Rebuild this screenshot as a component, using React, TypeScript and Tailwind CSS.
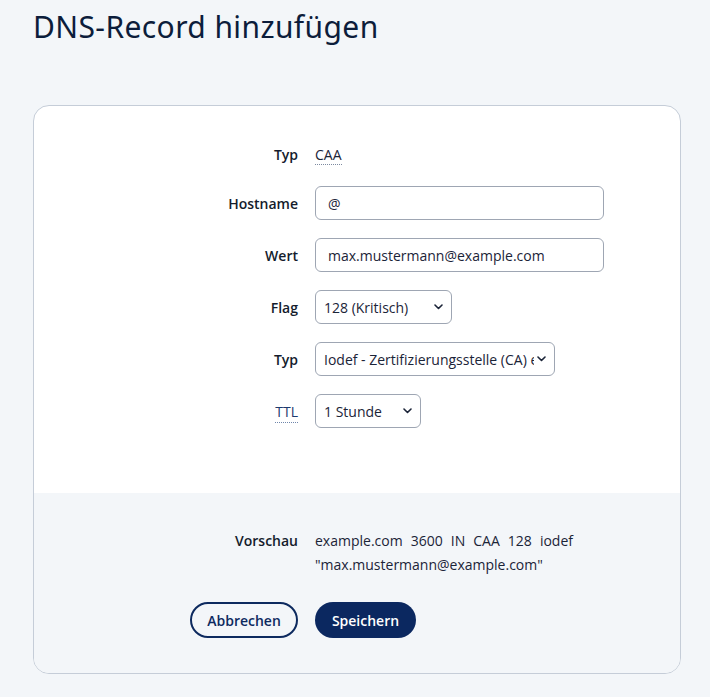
import { useState } from 'react';

const font = { fontFamily: '"Open Sans", "Noto Sans", sans-serif' };

function Chevron() {
  return (
    <svg width="9" height="6" viewBox="0 0 9 6" className="shrink-0">
      <path d="M1 1l3.5 3.5L8 1" fill="none" stroke="#1b2438" strokeWidth="1.6" strokeLinecap="round" strokeLinejoin="round" />
    </svg>
  );
}

function FakeSelect({ value, width }: { value: string; width: string }) {
  return (
    <div className={`flex h-[34px] items-center rounded-[6px] border border-[#9ea6b3] bg-white pl-[8px] pr-[8px] ${width}`}>
      <span className="mr-[3px] min-w-0 flex-1 overflow-hidden whitespace-nowrap text-[14px] text-[#1b2438]">{value}</span>
      <Chevron />
    </div>
  );
}

function Label({ children, abbr }: { children: string; abbr?: boolean }) {
  if (abbr) {
    return (
      <span className="border-b border-dotted border-[#6f86ab] pb-[1px] text-[14px] text-[#1d3a6e]">{children}</span>
    );
  }
  return <span className="text-[14px] font-semibold text-[#141c2c]">{children}</span>;
}

export default function App() {
  const [hostname, setHostname] = useState('@');
  const [wert, setWert] = useState('max.mustermann@example.com');

  return (
    <div className="min-h-[697px] bg-[#f3f6f9] pb-[25px] pl-[33px] pr-[29px] pt-[5px] text-[#1b2438]" style={font}>
      <h1
        className="text-[30px] font-normal leading-[44px] tracking-[0.4px] text-[#0c1d3b]"
        style={{ fontFamily: '"Noto Sans", sans-serif' }}
      >
        DNS-Record hinzufügen
      </h1>

      <div className="mt-[56px] overflow-hidden rounded-[16px] border border-[#c5cdd8] bg-white">
        {/* Formular */}
        <div className="grid grid-cols-[264px_1fr] items-center gap-x-[17px] gap-y-[18px] pb-[65px] pt-[38px]">
          <div className="text-right leading-[20px]"><Label>Typ</Label></div>
          <div className="leading-[20px]">
            <span className="border-b border-dotted border-[#7d8aa0] text-[14px] text-[#1b2438]">CAA</span>
          </div>

          <div className="mt-[3px] text-right"><Label>Hostname</Label></div>
          <input
            value={hostname}
            onChange={(e) => setHostname(e.target.value)}
            className="mt-[3px] h-[34px] w-[289px] rounded-[6px] border border-[#9ea6b3] bg-white px-[12px] text-[14px] text-[#1b2438] outline-none"
            style={font}
          />

          <div className="text-right"><Label>Wert</Label></div>
          <input
            value={wert}
            onChange={(e) => setWert(e.target.value)}
            className="h-[34px] w-[289px] rounded-[6px] border border-[#9ea6b3] bg-white px-[12px] text-[14px] text-[#1b2438] outline-none"
            style={font}
          />

          <div className="text-right"><Label>Flag</Label></div>
          <FakeSelect value="128 (Kritisch)" width="w-[137px]" />

          <div className="text-right"><Label>Typ</Label></div>
          <FakeSelect value="Iodef - Zertifizierungsstelle (CA) erlaubt" width="w-[240px]" />

          <div className="text-right"><Label abbr>TTL</Label></div>
          <FakeSelect value="1 Stunde" width="w-[106px]" />
        </div>

        {/* Vorschau + Aktionen */}
        <div className="grid grid-cols-[264px_1fr] gap-x-[17px] bg-[#f3f6f9] pb-[35px] pt-[36px]">
          <div className="text-right text-[14px] font-semibold leading-[24px] text-[#141c2c]">Vorschau</div>
          <p className="w-[258px] text-justify text-[14px] leading-[24px] text-[#1b2438]">
            example.com 3600 IN CAA 128 iodef "max.mustermann@example.com"
          </p>

          <div className="mt-[25px] flex justify-end">
            <button className="h-[36px] w-[108px] rounded-full border-2 border-[#0d2a5f] text-[14px] font-semibold text-[#0d2a5f]">
              Abbrechen
            </button>
          </div>
          <div className="mt-[25px]">
            <button className="h-[36px] w-[101px] rounded-full bg-[#0b2860] text-[14px] font-semibold text-white">
              Speichern
            </button>
          </div>
        </div>
      </div>
    </div>
  );
}
